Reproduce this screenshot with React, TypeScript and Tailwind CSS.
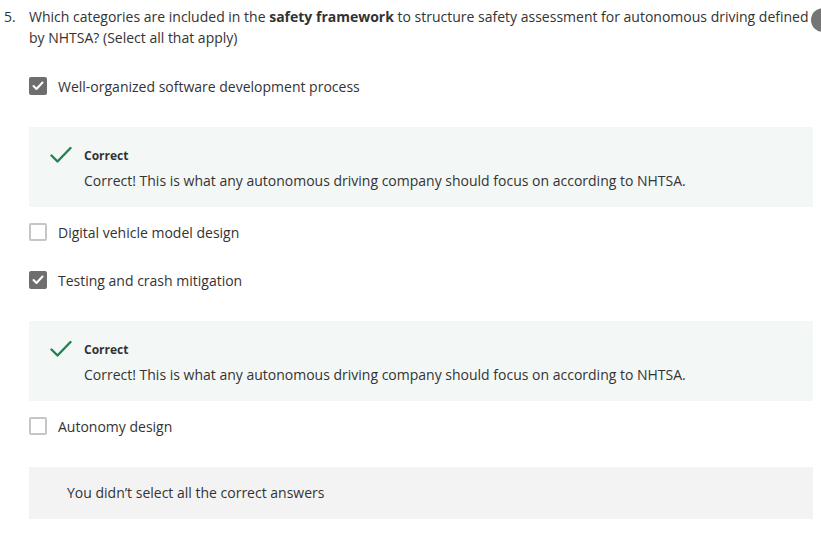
import React from "react";

interface Option {
    label: string;
    checked: boolean;
    feedback?: string;
}

const options: Option[] = [
    { label: "Well-organized software development process", checked: true, feedback: "Correct! This is what any autonomous driving company should focus on according to NHTSA." },
    { label: "Digital vehicle model design", checked: false },
    { label: "Testing and crash mitigation", checked: true, feedback: "Correct! This is what any autonomous driving company should focus on according to NHTSA." },
    { label: "Autonomy design", checked: false },
];

const CheckBox = ({ checked }: { checked: boolean }) => {
    if (checked) {
        return (
            <span className="w-[18px] h-[18px] rounded-[2px] bg-[#6e6e6e] flex items-center justify-center shrink-0">
                <svg width="12" height="10" viewBox="0 0 12 10" fill="none">
                    <polyline points="1.5,5 4.5,8 10.5,1.5" stroke="#ffffff" strokeWidth="2" strokeLinecap="round" strokeLinejoin="round" />
                </svg>
            </span>
        );
    }
    return <span className="w-[18px] h-[18px] rounded-[2px] border-2 border-[#c6c6c6] bg-white shrink-0" />;
};

const Feedback = ({ text }: { text: string }) => (
    <div className="mt-[28px] mb-[14px] bg-[#f3f8f6] h-[80px] pt-[20px] pl-[21px] flex gap-[12px]">
        <svg width="22" height="18" viewBox="0 0 22 18" fill="none" className="-mt-[1px] shrink-0">
            <polyline points="1.5,9.5 7.5,15.5 20.5,2" stroke="#1f8354" strokeWidth="2.4" strokeLinecap="round" strokeLinejoin="round" />
        </svg>
        <div>
            <div className="text-[12px] leading-[18px] font-bold text-[#333]">Correct</div>
            <div className="mt-[4.5px] text-[14px] leading-[21px] text-[#333]">{text}</div>
        </div>
    </div>
);

const App = () => {
    return (
        <div className="relative w-[821px] h-[545px] overflow-hidden bg-white text-[#333] font-['Open_Sans',sans-serif] text-[14px]">
            <div className="flex pt-[6px] pl-[4px]">
                <span className="w-[25px] leading-[21px]">5.</span>
                <p className="w-[784px] leading-[21px]">
                    Which categories are included in the <b className="font-bold">safety framework</b> to structure safety assessment for autonomous driving defined by NHTSA? (Select all that apply)
                </p>
            </div>
            <div className="absolute left-[811px] top-[8px] w-[24px] h-[24px] rounded-full bg-[#757575]" />
            <div className="pl-[29px] w-[813px] mt-[27px]">
                {options.map((o, i) => (
                    <div key={i}>
                        <div className={`flex items-center gap-[11px] h-[24px] pb-[2px] ${!o.feedback && i < options.length - 1 ? "mb-[24px]" : ""}`}>
                            <CheckBox checked={o.checked} />
                            <span className="leading-[21px]">{o.label}</span>
                        </div>
                        {o.feedback && <Feedback text={o.feedback} />}
                    </div>
                ))}
                <div className="mt-[28px] bg-[#f3f3f3] h-[52px] pl-[38px] pb-[2px] flex items-center">
                    <span className="leading-[21px]">You didn’t select all the correct answers</span>
                </div>
            </div>
        </div>
    );
};

export default App;
